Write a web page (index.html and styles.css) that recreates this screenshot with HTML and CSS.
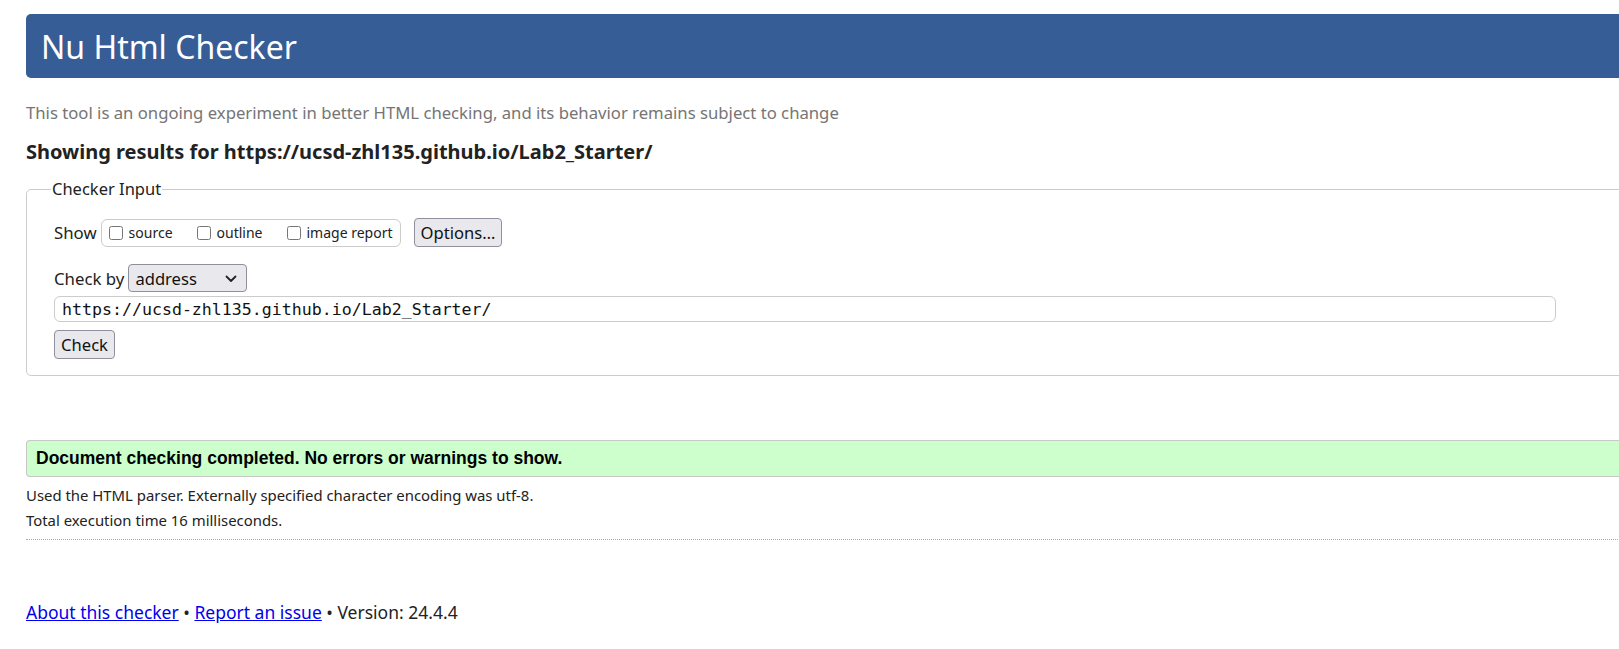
FILE: index.html
```html
<!DOCTYPE html>
<html lang="en">
<head>
<meta charset="utf-8">
<title>Showing results for https://ucsd-zhl135.github.io/Lab2_Starter/ - Nu Html Checker</title>
<link rel="stylesheet" href="styles.css">
</head>
<body>
<div class="page">
  <h1 class="banner">Nu Html Checker</h1>
  <p class="intro">This tool is an ongoing experiment in better HTML checking, and its behavior remains subject to change</p>
  <h2 class="results-title">Showing results for https://ucsd-zhl135.github.io/Lab2_Starter/</h2>

  <fieldset class="checker">
    <legend class="checker-legend">Checker Input</legend>
    <div class="show-row">
      <span class="label">Show</span>
      <span class="show-group">
        <label class="opt"><input type="checkbox" class="cb"> source</label>
        <label class="opt"><input type="checkbox" class="cb"> outline</label>
        <label class="opt"><input type="checkbox" class="cb"> image report</label>
      </span>
      <button class="btn options-btn" type="button">Options…</button>
    </div>
    <div class="by-row">
      <span class="label">Check by</span>
      <span class="select-wrap">
        <select class="select"><option>address</option></select>
        <svg class="chev" width="12" height="8" viewBox="0 0 12 8"><path d="M1.5 1.5 L6 6 L10.5 1.5" fill="none" stroke="#222" stroke-width="1.8" stroke-linecap="round" stroke-linejoin="round"/></svg>
      </span>
    </div>
    <div class="url-row">
      <input class="url" type="text" value="https://ucsd-zhl135.github.io/Lab2_Starter/">
    </div>
    <div class="check-row">
      <button class="btn check-btn" type="button">Check</button>
    </div>
  </fieldset>

  <div class="success">Document checking completed. No errors or warnings to show.</div>
  <div class="details">
    <p class="detail-line">Used the HTML parser. Externally specified character encoding was utf-8.</p>
    <p class="detail-line">Total execution time 16 milliseconds.</p>
  </div>
  <hr class="sep">

  <p class="footer"><a href="#">About this checker</a> • <a href="#">Report an issue</a> • Version: 24.4.4</p>
</div>
</body>
</html>
```
FILE: styles.css
```css
html {
  overflow: hidden;
  background: #fff;
}
body {
  margin: 0;
  font-family: "Noto Sans", "Open Sans", sans-serif;
  color: #222;
}
.page {
  width: 1680px;
  padding: 14px 0 0 26px;
}
.banner {
  margin: 0;
  height: 64px;
  box-sizing: border-box;
  padding: 0 0 0 15px;
  display: flex;
  align-items: center;
  background: #365d95;
  color: #fff;
  font-weight: normal;
  font-size: 32px;
  border-radius: 5px 0 0 5px;
}
.intro {
  margin: 24px 0 0 0;
  font-size: 16.7px;
  line-height: 22px;
  color: #757575;
}
.results-title {
  margin: 15px 0 0 0;
  font-size: 20px;
  line-height: 26px;
  font-weight: bold;
  color: #222;
}
.checker {
  margin: 13px 0 0 0;
  padding: 18px 0 16px 27px;
  border: 1px solid #ccc;
  border-radius: 5px 0 0 5px;
}
.checker-legend {
  padding: 0 1px;
  margin-left: -3px;
  font-size: 16.5px;
  line-height: 22px;
  color: #222;
}
.show-row {
  display: flex;
  align-items: center;
  height: 29px;
}
.label {
  font-size: 16.8px;
  margin-right: 4px;
}
.show-group {
  display: flex;
  align-items: center;
  height: 28px;
  box-sizing: border-box;
  border: 1px solid #ccc;
  border-radius: 6px;
  padding: 0 7px 0 7px;
  gap: 24px;
}
.opt {
  display: flex;
  align-items: center;
  font-size: 14px;
  gap: 6px;
}
.cb {
  margin: 0;
  width: 14px;
  height: 14px;
}
.btn {
  font-family: "Noto Sans", "Open Sans", sans-serif;
  background: #e9e9ed;
  border: 1px solid #8f8f9d;
  border-radius: 4px;
  color: #111;
  padding: 0 6px;
}
.options-btn {
  margin-left: 13px;
  height: 29px;
  font-size: 16.6px;
}
.by-row {
  display: flex;
  align-items: center;
  margin-top: 17px;
  height: 28px;
}
.select-wrap {
  position: relative;
  display: inline-flex;
}
.select {
  appearance: none;
  -webkit-appearance: none;
  width: 119px;
  height: 28px;
  background: #e9e9ed;
  border: 1px solid #8f8f9d;
  border-radius: 4px;
  font-family: "Noto Sans", "Open Sans", sans-serif;
  font-size: 16.6px;
  color: #111;
  padding: 0 0 0 6px;
}
.chev {
  position: absolute;
  right: 10px;
  top: 11px;
  pointer-events: none;
}
.url-row {
  margin-top: 4px;
}
.url {
  width: 1502px;
  height: 26px;
  box-sizing: border-box;
  border: 1px solid #ccc;
  border-radius: 6px;
  font-family: "DejaVu Sans Mono", "Liberation Mono", monospace;
  font-size: 16.6px;
  padding: 0 7px;
  color: #111;
}
.check-row {
  margin-top: 8px;
}
.check-btn {
  height: 29px;
  width: 61px;
  font-size: 16.6px;
  padding: 0;
}
.success {
  margin-top: 64px;
  height: 37px;
  box-sizing: border-box;
  display: flex;
  align-items: center;
  padding-left: 9px;
  background: #ccffcc;
  border: 1px solid #c8c8c8;
  border-right: 0;
  border-radius: 4px 0 0 4px;
  font-family: "Liberation Sans", Arial, sans-serif;
  font-weight: bold;
  font-size: 17.5px;
  color: #000;
}
.details {
  margin-top: 6px;
}
.detail-line {
  margin: 0;
  font-size: 14.9px;
  line-height: 25px;
  color: #222;
}
.sep {
  margin: 6px 0 0 0;
  border: 0;
  border-top: 1px dotted #aaa;
  height: 0;
}
.footer {
  margin: 60px 0 0 0;
  font-size: 17.5px;
  line-height: 24px;
  color: #222;
}
.footer a {
  color: #0000ee;
}
```
